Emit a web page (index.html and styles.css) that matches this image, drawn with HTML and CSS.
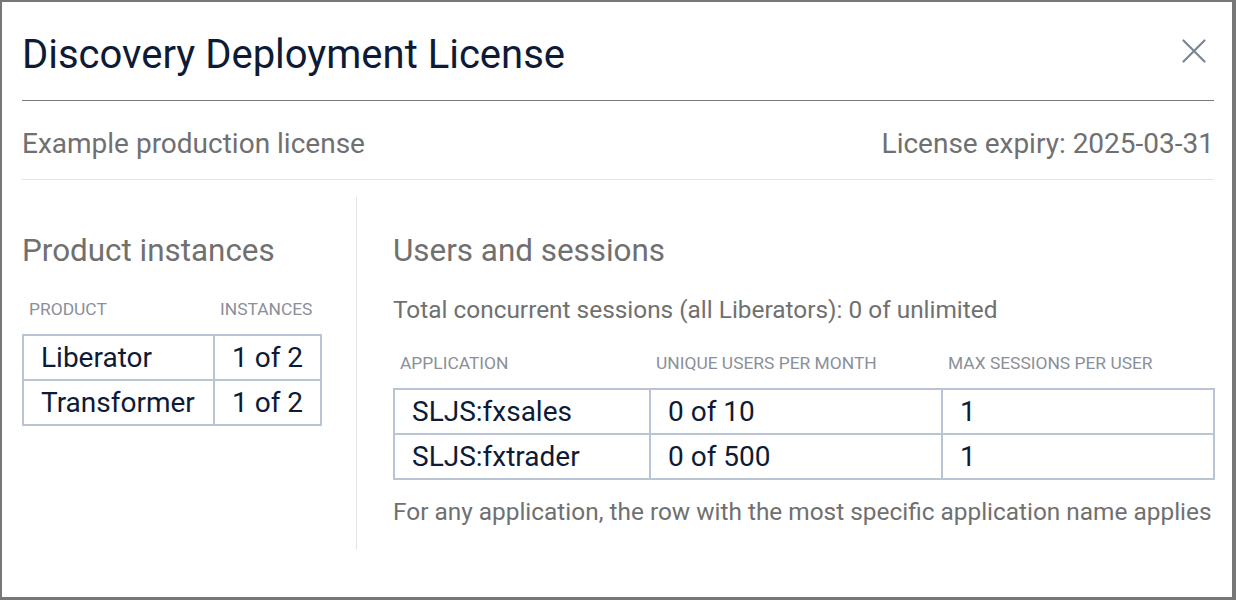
FILE: index.html
```html
<!DOCTYPE html>
<html>
<head>
<meta charset="utf-8">
<link rel="stylesheet" href="styles.css">
</head>
<body>
<div class="dialog">
  <div class="dialog-header">
    <h1 class="title">Discovery Deployment License</h1>
    <button class="close" aria-label="Close">
      <svg width="24" height="24" viewBox="0 0 24 24"><path d="M1.5 1.5 L22.5 22.5 M22.5 1.5 L1.5 22.5" stroke="#7b8594" stroke-width="2.2" stroke-linecap="round" fill="none"/></svg>
    </button>
  </div>
  <div class="subheader">
    <span>Example production license</span>
    <span>License expiry: 2025-03-31</span>
  </div>
  <div class="content">
    <section class="col-left">
      <h2 class="section-title">Product instances</h2>
      <table class="grid grid-products">
        <colgroup><col class="c-product"><col class="c-instances"></colgroup>
        <thead><tr><th>Product</th><th>Instances</th></tr></thead>
        <tbody>
          <tr><td>Liberator</td><td>1 of 2</td></tr>
          <tr><td>Transformer</td><td>1 of 2</td></tr>
        </tbody>
      </table>
    </section>
    <section class="col-right">
      <h2 class="section-title">Users and sessions</h2>
      <p class="note">Total concurrent sessions (all Liberators): 0 of unlimited</p>
      <table class="grid grid-apps">
        <colgroup><col class="c-app"><col class="c-users"><col class="c-sessions"></colgroup>
        <thead><tr><th>Application</th><th>Unique users per month</th><th>Max sessions per user</th></tr></thead>
        <tbody>
          <tr><td>SLJS:fxsales</td><td>0 of 10</td><td>1</td></tr>
          <tr><td>SLJS:fxtrader</td><td>0 of 500</td><td>1</td></tr>
        </tbody>
      </table>
      <p class="note footnote">For any application, the row with the most specific application name applies</p>
    </section>
  </div>
</div>
</body>
</html>
```

FILE: styles.css
```css
html, body {
  margin: 0;
  padding: 0;
  background: #ffffff;
}
body {
  font-family: Roboto, "Noto Sans", sans-serif;
}
.dialog {
  box-sizing: border-box;
  width: 1236px;
  height: 600px;
  border-style: solid;
  border-color: #777777;
  border-width: 2px 4px 3px 2px;
  padding: 0 18px 0 20px;
  background: #fff;
}
.dialog-header {
  display: flex;
  align-items: center;
  justify-content: space-between;
  height: 98px;
  border-bottom: 1px solid #777777;
}
.title {
  margin: 8px 0 0;
  font-size: 40px;
  font-weight: 400;
  color: #0d1b36;
  line-height: 1;
}
.close {
  border: 0;
  background: none;
  padding: 0;
  margin-right: 8px;
  width: 24px;
  height: 24px;
  cursor: pointer;
}
.close svg { display: block; }
.subheader {
  display: flex;
  justify-content: space-between;
  align-items: center;
  box-sizing: border-box;
  height: 79px;
  padding-top: 6px;
  border-bottom: 1px solid #e3e3e3;
  font-size: 28px;
  color: #707070;
}
.content {
  display: flex;
  padding-top: 17px;
}
.col-left {
  flex: 0 0 334px;
  height: 353px;
  border-right: 1px solid #e3e3e3;
}
.col-right {
  flex: 1;
  min-width: 0;
  padding-left: 36px;
}
.section-title {
  margin: 36px 0 0;
  font-size: 31.4px;
  font-weight: 400;
  color: #707070;
  line-height: 36px;
}
.note {
  margin: 0;
  font-size: 24.4px;
  color: #707070;
  line-height: 28px;
}
.col-right .note { margin-top: 27px; }
.col-right .footnote { margin-top: 18px; }
.grid {
  border-collapse: collapse;
  table-layout: fixed;
}
.grid th {
  text-align: left;
  font-weight: 400;
  text-transform: uppercase;
  font-size: 17.4px;
  color: #8a8f99;
  padding: 0 0 15px 6px;
  line-height: 20px;
}
.grid td {
  border: 2px solid #b9c5d5;
  font-size: 28px;
  color: #0d1b36;
  height: 43px;
  padding: 0 0 0 17px;
  line-height: 30px;
}
.grid-products { margin-top: 30px; width: 298px; }
.c-product { width: 191px; }
.c-instances { width: 107px; }
.grid-apps { margin-top: 29px; width: 820px; }
.c-app { width: 256px; }
.c-users { width: 292px; }
.c-sessions { width: 272px; }
```
